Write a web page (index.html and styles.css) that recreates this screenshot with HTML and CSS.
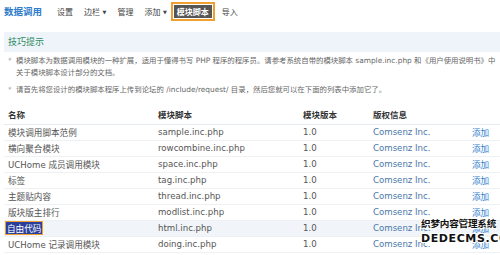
FILE: index.html
```html
<!DOCTYPE html>
<html lang="zh-CN">
<head>
  <meta charset="UTF-8">
  <title>数据调用</title>
  <link rel="stylesheet" href="styles.css">
</head>
<body>
  <header class="nav">
    <h1>数据调用</h1>
    <span class="item">设置</span>
    <span class="item">边栏 <i>▼</i></span>
    <span class="item">管理</span>
    <span class="item">添加 <i>▼</i></span>
    <span class="item current"><b>模块脚本</b></span>
    <span class="item">导入</span>
  </header>
  <main>
    <div class="tips">技巧提示</div>
    <ul class="notes">
      <li>模块脚本为数据调用模块的一种扩展，适用于懂得书写 PHP 程序的程序员。请参考系统自带的模块脚本 sample.inc.php 和《用户使用说明书》中<br>关于模块脚本设计部分的文档。</li>
      <li>请首先将您设计的模块脚本程序上传到论坛的 /include/request/ 目录，然后您就可以在下面的列表中添加它了。</li>
    </ul>
    <table class="list">
      <tr class="head">
        <th>名称</th>
        <th>模块脚本</th>
        <th>模块版本</th>
        <th>版权信息</th>
        <th></th>
      </tr>
      <tr>
        <td>模块调用脚本范例</td><td>sample.inc.php</td><td>1.0</td><td class="corp">Comsenz Inc.</td><td class="act">添加</td>
      </tr>
      <tr>
        <td>横向聚合模块</td><td>rowcombine.inc.php</td><td>1.0</td><td class="corp">Comsenz Inc.</td><td class="act">添加</td>
      </tr>
      <tr>
        <td>UCHome 成员调用模块</td><td>space.inc.php</td><td>1.0</td><td class="corp">Comsenz Inc.</td><td class="act">添加</td>
      </tr>
      <tr>
        <td>标签</td><td>tag.inc.php</td><td>1.0</td><td class="corp">Comsenz Inc.</td><td class="act">添加</td>
      </tr>
      <tr>
        <td>主题贴内容</td><td>thread.inc.php</td><td>1.0</td><td class="corp">Comsenz Inc.</td><td class="act">添加</td>
      </tr>
      <tr>
        <td>版块版主排行</td><td>modlist.inc.php</td><td>1.0</td><td class="corp">Comsenz Inc.</td><td class="act">添加</td>
      </tr>
      <tr class="hover">
        <td><span class="picked">自由代码</span></td><td>html.inc.php</td><td>1.0</td><td class="corp">Comsenz Inc.</td><td class="act">添加</td>
      </tr>
      <tr>
        <td>UCHome 记录调用模块</td><td>doing.inc.php</td><td>1.0</td><td class="corp">Comsenz Inc.</td><td class="act">添加</td>
      </tr>
    </table>
  </main>
  <!-- 水印 -->
  <div class="mark">
    <div class="mark-cn">织梦内容管理系统</div>
    <div class="mark-en">DEDECMS.COM</div>
  </div>
</body>
</html>
```

FILE: styles.css
```css
* {
  margin: 0;
  padding: 0;
  box-sizing: border-box;
}
body {
  width: 500px;
  height: 255px;
  overflow: hidden;
  background: #fff;
  color: #555;
  font-family: "DejaVu Sans", "Noto Sans CJK SC", sans-serif;
  font-size: 9px;
}
.nav {
  display: flex;
  align-items: center;
  height: 22px;
  padding-left: 4px;
}
.nav h1 {
  font-size: 9.5px;
  font-weight: bold;
  color: #2d7ccc;
  margin-right: 15px;
}
.nav .item {
  font-size: 8px;
  color: #444;
  margin-right: 11px;
}
.nav .item i {
  font-style: normal;
  font-size: 5px;
  vertical-align: 1px;
}
.nav .current {
  margin-left: -7px;
  margin-right: 7px;
  border: 2px solid #f0a030;
  padding: 1px;
  background: #fff;
}
.nav .current b {
  display: block;
  background: #555;
  color: #fff;
  padding: 1px 3px;
  font-weight: bold;
}
main {
  padding: 0 0 0 4px;
}
.tips {
  margin-top: 10px;
  height: 20px;
  line-height: 20px;
  padding-left: 4px;
  background: #eef4fa;
  color: #2f8a62;
  font-size: 9px;
}
.notes {
  list-style: none;
  padding: 3px 0 0 12px;
  line-height: 12px;
  font-size: 7.4px;
  color: #666;
  white-space: nowrap;
}
.notes li {
  position: relative;
  margin-bottom: 5px;
}
.notes li::before {
  content: "*";
  position: absolute;
  left: -8px;
  color: #999;
}
.list {
  width: 496px;
  border-collapse: collapse;
  margin-top: 8px;
  table-layout: fixed;
}
.list th,
.list td {
  padding: 0 4px;
  text-align: left;
  white-space: nowrap;
  overflow: hidden;
}
.list th:nth-child(1) { width: 150px; }
.list th:nth-child(2) { width: 145px; }
.list th:nth-child(3) { width: 70px; }
.list th:nth-child(4) { width: 99px; }
.list .head th {
  height: 20px;
  font-weight: bold;
  color: #333;
  font-size: 8.5px;
  border-bottom: 1px solid #e6ebf0;
}
.list td {
  height: 16px;
  border-bottom: 1px solid #eef1f4;
  color: #555;
  font-size: 8.6px;
}
.list .corp {
  color: #4a78a8;
}
.list .act {
  color: #2f7fcf;
}
.list .hover td {
  background: #f1f5fa;
}
.picked {
  display: inline-block;
  margin-left: -3px;
  border: 1.5px solid #f0a030;
  padding: 0 1px;
  background: #2b3f9a;
  color: #fff;
}
.mark {
  position: absolute;
  left: 421px;
  top: 219px;
  color: #111;
  font-family: "Noto Sans CJK SC", sans-serif;
  text-shadow: -1px -1px 0 #fff, 1px -1px 0 #fff, -1px 1px 0 #fff, 1px 1px 0 #fff;
  line-height: 1;
}
.mark-cn {
  font-size: 9.6px;
  font-weight: bold;
  letter-spacing: -0.2px;
}
.mark-en {
  margin-top: 4px;
  font-family: "DejaVu Sans", sans-serif;
  font-size: 11px;
  font-weight: bold;
  letter-spacing: 0.6px;
}
```
